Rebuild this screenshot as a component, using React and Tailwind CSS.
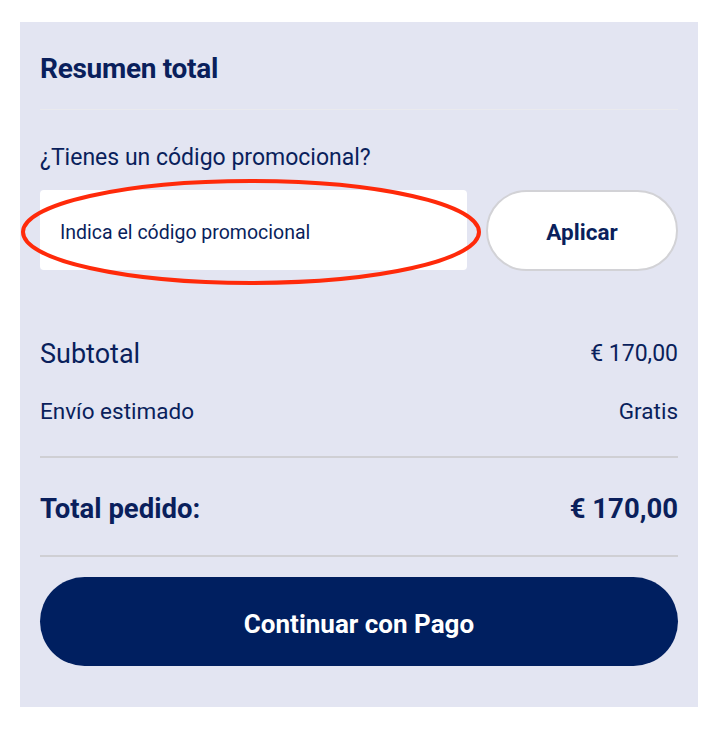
const Row = ({ label, value, className }) => (
  <div className={`flex items-center justify-between ${className}`}>
    <span>{label}</span>
    <span>{value}</span>
  </div>
)

export default function App() {
  return (
    <div className="min-h-[738px] bg-white pt-[22px] pl-5 font-['Roboto',sans-serif] text-[#0a1f5c]">
      <div className="w-[678px] bg-[#e3e5f2] px-5 pb-[41px]">
        {/* Header */}
        <div className="flex h-[88px] items-center border-b border-[#eaeaee] pt-[6px]">
          <h2 className="text-[28px] font-bold tracking-[-0.3px]">Resumen total</h2>
        </div>

        {/* Promo */}
        <p className="mt-[32px] text-[23px] leading-8">¿Tienes un código promocional?</p>
        <div className="relative mt-[16px] flex gap-[19px]">
          <div className="flex h-[80px] w-[427px] items-center rounded bg-white pl-5 pt-[5px] text-[19.5px]">
            Indica el código promocional
          </div>
          <button className="h-[81px] flex-1 rounded-full border-2 border-[#d2d2d6] bg-white pt-[5px] text-[22.5px] font-bold">
            Aplicar
          </button>
          {/* annotation */}
          <svg className="pointer-events-none absolute left-[-20px] top-[-12px]" width="464" height="108" viewBox="0 0 464 108">
            <ellipse cx="231" cy="54" rx="228" ry="51" fill="none" stroke="#ff2a0a" strokeWidth="4" />
          </svg>
        </div>

        {/* Totals */}
        <Row label="Subtotal" value="€ 170,00" className="mt-[67px] h-8 text-[27px] [&>span:last-child]:text-[23px]" />
        <Row label="Envío estimado" value="Gratis" className="mt-[27px] h-[30px] text-[22.5px]" />
        <div className="mt-[29px] border-b-2 border-[#cfcfd4]" />
        <Row label="Total pedido:" value="€ 170,00" className="h-[99px] pt-[5px] text-[27.5px] font-bold border-b-2 border-[#cfcfd4]" />

        <button className="mt-[20px] h-[89px] w-full rounded-full bg-[#001f60] pt-[5px] text-[26px] font-bold text-white">
          Continuar con Pago
        </button>
      </div>
    </div>
  )
}
